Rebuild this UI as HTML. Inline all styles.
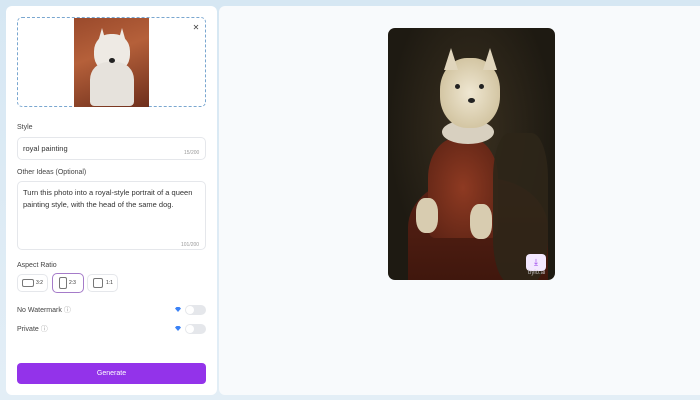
<!DOCTYPE html>
<html><head><style>
*{margin:0;padding:0;box-sizing:border-box}
body{width:700px;height:400px;background:linear-gradient(180deg,#d6e7f3,#e3eef6);font-family:"Liberation Sans",sans-serif;position:relative;overflow:hidden;color:#333}
.abs{position:absolute}
.left{left:6px;top:6px;width:211px;height:389px;background:#fff;border-radius:6px}
.right{left:219px;top:6px;width:481px;height:389px;background:#f8fafc;border-radius:6px 0 0 6px}
.lbl{font-size:7px;color:#444}
.box{border:1px solid #e5e7eb;border-radius:5px;background:#fff}
.tog{width:21px;height:10px;border-radius:5px;background:#e5e7eb;left:185px}
.tog:after{content:"";position:absolute;left:1px;top:1px;width:8px;height:8px;border-radius:50%;background:#fff}
.dia{width:6px;height:5px;left:175px;background:#3b82f6;clip-path:polygon(0 30%,25% 0,75% 0,100% 30%,50% 100%)}
</style></head><body>
<div class="abs left"></div>
<div class="abs right"></div>
<div class="abs" style="left:17px;top:17px;width:189px;height:90px;border:1px dashed #7aa7d0;border-radius:5px"></div>
<div class="abs" style="left:74px;top:18px;width:75px;height:89px;background:linear-gradient(160deg,#9a4a2c,#b5603a 40%,#6e2f1c);overflow:hidden">
 <div class="abs" style="left:24px;top:10px;width:8px;height:14px;background:#eeeae4;clip-path:polygon(50% 0,100% 100%,0 100%)"></div>
 <div class="abs" style="left:44px;top:10px;width:8px;height:14px;background:#eeeae4;clip-path:polygon(50% 0,100% 100%,0 100%)"></div>
 <div class="abs" style="left:20px;top:16px;width:36px;height:38px;border-radius:45%;background:#eeeae4"></div>
 <div class="abs" style="left:16px;top:44px;width:44px;height:44px;border-radius:40% 40% 10% 10%;background:#e6e2dc"></div>
 <div class="abs" style="left:35px;top:40px;width:6px;height:5px;border-radius:50%;background:#222"></div>
</div>
<div class="abs" style="left:188px;top:20px;width:16px;height:16px;border-radius:50%;background:#fff;font-size:8px;text-align:center;line-height:16px;color:#444">✕</div>
<div class="abs lbl" style="left:17px;top:124px">Style</div>
<div class="abs box" style="left:17px;top:137px;width:189px;height:23px"></div>
<div class="abs" style="left:23px;top:144px;font-size:7.5px;color:#333">royal painting</div>
<div class="abs" style="left:184px;top:150px;font-size:5px;color:#999">15/200</div>
<div class="abs lbl" style="left:17px;top:169px">Other Ideas (Optional)</div>
<div class="abs box" style="left:17px;top:181px;width:189px;height:69px"></div>
<div class="abs" style="left:23px;top:187px;width:180px;font-size:7.5px;line-height:12px;color:#333">Turn this photo into a royal-style portrait of a queen painting style, with the head of the same dog.</div>
<div class="abs" style="left:181px;top:242px;font-size:5px;color:#999">101/200</div>
<div class="abs lbl" style="left:17px;top:262px">Aspect Ratio</div>
<div class="abs box" style="left:17px;top:274px;width:31px;height:18px"></div>
<div class="abs" style="left:22px;top:279px;width:12px;height:8px;border:1px solid #777;border-radius:2px"></div>
<div class="abs" style="left:36px;top:280px;font-size:5px">3:2</div>
<div class="abs" style="left:52px;top:273px;width:32px;height:20px;border:1.5px solid #a57bc9;border-radius:5px;background:#fff"></div>
<div class="abs" style="left:59px;top:277px;width:8px;height:12px;border:1px solid #777;border-radius:2px"></div>
<div class="abs" style="left:69px;top:280px;font-size:5px">2:3</div>
<div class="abs box" style="left:87px;top:274px;width:31px;height:18px"></div>
<div class="abs" style="left:93px;top:278px;width:10px;height:10px;border:1px solid #777;border-radius:2px"></div>
<div class="abs" style="left:106px;top:280px;font-size:5px">1:1</div>
<div class="abs lbl" style="left:17px;top:305px">No Watermark <span style="color:#999">ⓘ</span></div>
<div class="abs dia" style="top:307px"></div>
<div class="abs tog" style="top:305px"></div>
<div class="abs lbl" style="left:17px;top:324px">Private <span style="color:#999">ⓘ</span></div>
<div class="abs dia" style="top:326px"></div>
<div class="abs tog" style="top:324px"></div>
<div class="abs" style="left:17px;top:363px;width:189px;height:21px;background:#9333ea;border-radius:4px;color:#fff;font-size:7px;text-align:center;line-height:21px">Generate</div>
<div class="abs" style="left:388px;top:28px;width:167px;height:252px;border-radius:7px;overflow:hidden;background:radial-gradient(ellipse at 50% 40%,#3a3020,#1e1a12 70%)">
 <div class="abs" style="left:20px;top:150px;width:140px;height:110px;border-radius:45% 45% 0 0;background:linear-gradient(#5a2216,#3e160c)"></div>
 <div class="abs" style="left:40px;top:110px;width:70px;height:100px;border-radius:40% 40% 10% 10%;background:radial-gradient(#8e3a22,#5a2214)"></div>
 <div class="abs" style="left:105px;top:105px;width:55px;height:150px;border-radius:30%;background:#2e2618;opacity:.9"></div>
 <div class="abs" style="left:28px;top:170px;width:22px;height:35px;border-radius:40%;background:#d8ccb0"></div>
 <div class="abs" style="left:82px;top:176px;width:22px;height:35px;border-radius:40%;background:#d8ccb0"></div>
 <div class="abs" style="left:54px;top:92px;width:52px;height:24px;border-radius:50%;background:#d8d0c0"></div>
 <div class="abs" style="left:52px;top:30px;width:60px;height:70px;border-radius:45%;background:radial-gradient(#efe7d2,#c8b890)"></div>
 <div class="abs" style="left:56px;top:20px;width:14px;height:22px;background:#e0d5bc;clip-path:polygon(50% 0,100% 100%,0 100%)"></div>
 <div class="abs" style="left:95px;top:20px;width:14px;height:22px;background:#e0d5bc;clip-path:polygon(50% 0,100% 100%,0 100%)"></div>
 <div class="abs" style="left:67px;top:56px;width:5px;height:5px;border-radius:50%;background:#222"></div>
 <div class="abs" style="left:91px;top:56px;width:5px;height:5px;border-radius:50%;background:#222"></div>
 <div class="abs" style="left:80px;top:70px;width:7px;height:5px;border-radius:50%;background:#222"></div>
 <div class="abs" style="left:138px;top:226px;width:20px;height:17px;border-radius:4px;background:#f3e8ff;color:#9333ea;font-size:9px;text-align:center;line-height:17px">⤓</div>
 <div class="abs" style="left:140px;top:242px;font-size:6px;color:#bbb">byio.ai</div>
</div>
</body></html>
